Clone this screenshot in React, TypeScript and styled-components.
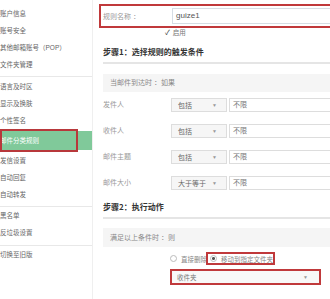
import React from "react";
import styled, { createGlobalStyle } from "styled-components";

const GlobalStyle = createGlobalStyle`
  html, body { margin: 0; padding: 0; background: #fff; }
  body {
    width: 330px;
    height: 299px;
    overflow: hidden;
    font-family: "Liberation Sans", "Noto Sans CJK SC", sans-serif;
  }
`;

const Page = styled.div`
  display: flex;
  width: 330px;
  height: 299px;
  overflow: hidden;
  align-items: stretch;
`;

const Sidebar = styled.nav`
  flex: 0 0 92px;
  width: 92px;
  border-right: 1px solid #efefef;
  display: flex;
  flex-direction: column;
`;

const NavGroup = styled.div<{ $top: number; $bottom: number; $last?: boolean }>`
  padding: ${(p) => p.$top}px 0 ${(p) => p.$bottom}px;
  border-bottom: ${(p) => (p.$last ? "none" : "1px solid #e8e8e8")};
`;

const NavItem = styled.div`
  height: 17px;
  line-height: 17px;
  font-size: 6.5px;
  color: #666;
  white-space: nowrap;
`;

const ActiveItem = styled(NavItem)`
  position: relative;
  height: 23px;
  box-sizing: border-box;
  padding: 2px 0;
  line-height: 19px;
  background: #80c99a;
  background-clip: content-box;
  color: #fff;

  &::after {
    content: "";
    position: absolute;
    left: 0;
    top: 0;
    width: 78px;
    height: 100%;
    box-sizing: border-box;
    border: 2px solid #b8383b;
  }
`;

const Main = styled.main`
  flex: 1;
  min-width: 0;
  padding-left: 10px;
  margin-right: -40px;
  display: flex;
  flex-direction: column;
`;

const NameRow = styled.div`
  margin-top: 4px;
  margin-left: -4px;
  height: 24px;
  box-sizing: border-box;
  border: 2px solid #c0393b;
  border-right: none;
  padding-left: 2px;
  display: flex;
  align-items: center;
`;

const NameLabel = styled.span`
  width: 69px;
  flex: 0 0 69px;
  font-size: 7px;
  color: #9a9a9a;
`;

const NameInput = styled.div`
  flex: 1;
  height: 16px;
  box-sizing: border-box;
  border: 1px solid #d6dde4;
  border-right: none;
  padding-left: 3px;
  line-height: 14px;
  font-size: 8px;
  color: #555;
`;

const CheckRow = styled.div`
  height: 10px;
  line-height: 10px;
  padding-left: 62px;
  display: flex;
  gap: 3px;
  font-size: 6.5px;
  color: #777;
`;

const CheckMark = styled.span`
  color: #333;
  font-size: 7px;
`;

const StepTitle = styled.div<{ $top: number }>`
  padding-top: ${(p) => p.$top}px;
  padding-bottom: 4px;
  line-height: 12px;
  font-size: 8px;
  font-weight: bold;
  color: #333;
  border-bottom: 2px solid #e5e5e5;
  font-family: "Noto Sans CJK SC", sans-serif;
`;

const Panel = styled.div<{ $top: number; $h: number }>`
  margin-top: ${(p) => p.$top}px;
  height: ${(p) => p.$h}px;
  line-height: ${(p) => p.$h}px;
  padding-left: 7px;
  background: #f5f5f5;
  font-size: 7px;
  color: #888;
`;

const FieldList = styled.div`
  margin-top: 6px;
  display: flex;
  flex-direction: column;
  gap: 12px;
`;

const FieldRow = styled.div`
  display: flex;
  height: 14px;
`;

const FieldLabel = styled.span`
  width: 68px;
  flex: 0 0 68px;
  line-height: 14px;
  font-size: 7px;
  color: #9a9a9a;
`;

const Select = styled.div`
  width: 56px;
  flex: 0 0 56px;
  box-sizing: border-box;
  border: 1px solid #dddddd;
  background: #f6f6f6;
  display: flex;
  align-items: center;
  justify-content: space-between;
  padding: 0 9px 0 6px;
  font-size: 7px;
  color: #666;
`;

const Arrow = styled.span`
  font-size: 5px;
  color: #999;
`;

const TextBox = styled.div`
  flex: 1;
  margin-left: 2px;
  box-sizing: border-box;
  border: 1px solid #dddddd;
  border-right: none;
  padding-left: 3px;
  line-height: 12px;
  font-size: 7px;
  color: #777;
`;

const RadioRow = styled.div`
  margin-top: 5px;
  margin-left: 67px;
  height: 13px;
  display: flex;
  align-items: center;
  font-size: 6.5px;
  color: #888;
`;

const Radio = styled.span<{ $checked?: boolean }>`
  width: 7px;
  height: 7px;
  flex: 0 0 7px;
  box-sizing: border-box;
  border-radius: 50%;
  border: 1px solid #bbb;
  background: ${(p) =>
    p.$checked ? "radial-gradient(circle, #555 0 1.3px, #fff 1.6px)" : "#fff"};
`;

const RadioLabel = styled.span`
  margin-left: 4px;
  white-space: nowrap;
`;

const RadioChosen = styled.span`
  height: 13px;
  box-sizing: border-box;
  border: 2px solid #c0393b;
  display: flex;
  align-items: center;
  padding: 0 0 0 2px;
  margin-left: -1px;
  background: #fff;
`;

const FolderSelect = styled.div`
  margin-top: 4px;
  margin-left: 67px;
  width: 151px;
  height: 16px;
  box-sizing: border-box;
  border: 2px solid #c0393b;
  background: #f8f8f8;
  display: flex;
  align-items: center;
  justify-content: space-between;
  padding: 0 11px 0 5px;
  font-size: 6.5px;
  color: #777;
`;

const groups: string[][] = [
  ["账户信息", "账号安全", "其他邮箱账号（POP）", "文件夹管理"],
  ["语言及时区", "显示及换肤", "个性签名", "*邮件分类规则", "发信设置", "自动回复", "自动转发"],
  ["黑名单", "反垃圾设置"],
  ["切换至旧版"],
];

const groupPad: [number, number][] = [
  [5, 3],
  [1, 3],
  [0, 4],
  [0, 0],
];

const fields: { label: string; op: string }[] = [
  { label: "发件人", op: "包括" },
  { label: "收件人", op: "包括" },
  { label: "邮件主题", op: "包括" },
  { label: "邮件大小", op: "大于等于" },
];

export default function App() {
  return (
    <>
      <GlobalStyle />
      <Page>
        <Sidebar>
          {groups.map((g, i) => (
            <NavGroup
              key={i}
              $top={groupPad[i][0]}
              $bottom={groupPad[i][1]}
              $last={i === groups.length - 1}
            >
              {g.map((item) =>
                item.startsWith("*") ? (
                  <ActiveItem key={item}>{item.slice(1)}</ActiveItem>
                ) : (
                  <NavItem key={item}>{item}</NavItem>
                )
              )}
            </NavGroup>
          ))}
        </Sidebar>
        <Main>
          <NameRow>
            <NameLabel>规则名称 ：</NameLabel>
            <NameInput>guize1</NameInput>
          </NameRow>
          <CheckRow>
            <CheckMark>✓</CheckMark>
            <span>启用</span>
          </CheckRow>
          <StepTitle $top={8}>步骤1：选择规则的触发条件</StepTitle>
          <Panel $top={10} $h={18}>当邮件到达时 ：如果</Panel>
          <FieldList>
            {fields.map((f) => (
              <FieldRow key={f.label}>
                <FieldLabel>{f.label}</FieldLabel>
                <Select>
                  <span>{f.op}</span>
                  <Arrow>▼</Arrow>
                </Select>
                <TextBox>不限</TextBox>
              </FieldRow>
            ))}
          </FieldList>
          <StepTitle $top={11}>步骤2：执行动作</StepTitle>
          <Panel $top={9} $h={19}>满足以上条件时 ：则</Panel>
          <RadioRow>
            <Radio />
            <RadioLabel>直接删除</RadioLabel>
            <RadioChosen>
              <Radio $checked />
              <RadioLabel>移动到指定文件夹</RadioLabel>
            </RadioChosen>
          </RadioRow>
          <FolderSelect>
            <span>收件夹</span>
            <Arrow>▼</Arrow>
          </FolderSelect>
        </Main>
      </Page>
    </>
  );
}
